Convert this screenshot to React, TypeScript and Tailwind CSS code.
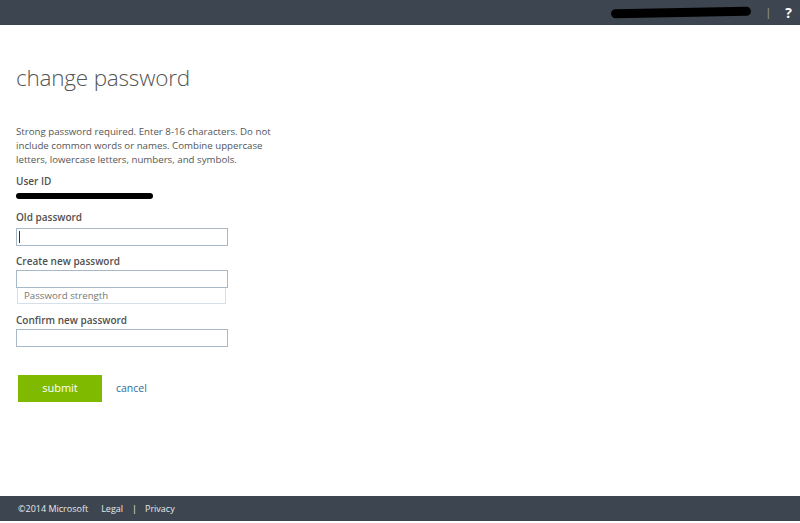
import React from 'react';

const Label = ({ children, className = '' }: { children: React.ReactNode; className?: string }) => (
  <div className={`text-[10px] font-semibold leading-[14px] text-[#505050] ${className}`}>{children}</div>
);

const Input = ({ className = '' }: { className?: string }) => (
  <input
    type="password"
    className={`block h-[18px] w-[212px] border border-[#a7b8c8] bg-white px-1 text-[11px] outline-none ${className}`}
  />
);

const App = () => {
  return (
    <div className="flex h-[523px] w-[800px] flex-col bg-white font-['Open_Sans',sans-serif] text-[#444]">
      {/* Top bar */}
      <div className="flex h-[25px] shrink-0 items-center justify-end bg-[#3d4650] pr-[8px]">
        <div className="h-[9px] w-[140px] -rotate-1 rounded-full bg-black" />
        <span className="ml-[14px] text-[11px] text-[#9aa1a8]">|</span>
        <span className="ml-[14px] text-[14px] font-bold text-white">?</span>
      </div>

      {/* Content */}
      <div className="flex-1 px-[16px]">
        <h1 className="mt-[39px] text-[22.5px] font-light leading-[28px] tracking-[-0.2px] text-[#555]">
          change password
        </h1>

        <p className="mt-[33px] w-[265px] text-[9.7px] leading-[14px] text-[#555]">
          Strong password required. Enter 8-16 characters. Do not include common words or names. Combine uppercase
          letters, lowercase letters, numbers, and symbols.
        </p>

        <Label className="mt-[7px]">User ID</Label>
        <div className="mt-[5px] h-[6px] w-[137px] rounded-full bg-black" />

        <Label className="mt-[11px]">Old password</Label>
        <div className="relative mt-[4px]">
          <Input />
          <div className="absolute left-[3px] top-[3px] h-[12px] w-px bg-[#333]" />
        </div>

        <Label className="mt-[8px]">Create new password</Label>
        <Input className="mt-[2px]" />
        <div className="ml-[1px] h-[16px] w-[209px] border border-t-0 border-[#d5e0ea] pl-[6px] text-[9.7px] leading-[15px] text-[#777]">
          Password strength
        </div>

        <Label className="mt-[9px]">Confirm new password</Label>
        <Input className="mt-[2px]" />

        <div className="mt-[28px] flex items-center">
          <button className="ml-[2px] h-[27px] w-[84px] bg-[#7fba00] text-[11px] text-white">submit</button>
          <a className="ml-[14px] text-[10.5px] text-[#2f6b9a]">cancel</a>
        </div>
      </div>

      {/* Footer */}
      <div className="mb-[2px] flex h-[25px] shrink-0 items-center bg-[#3d4650] pl-[18px] text-[9px] text-[#e6e8ea]">
        <span>©2014 Microsoft</span>
        <span className="ml-[13px]">Legal</span>
        <span className="ml-[9px]">|</span>
        <span className="ml-[8px]">Privacy</span>
      </div>
    </div>
  );
};

export default App;
